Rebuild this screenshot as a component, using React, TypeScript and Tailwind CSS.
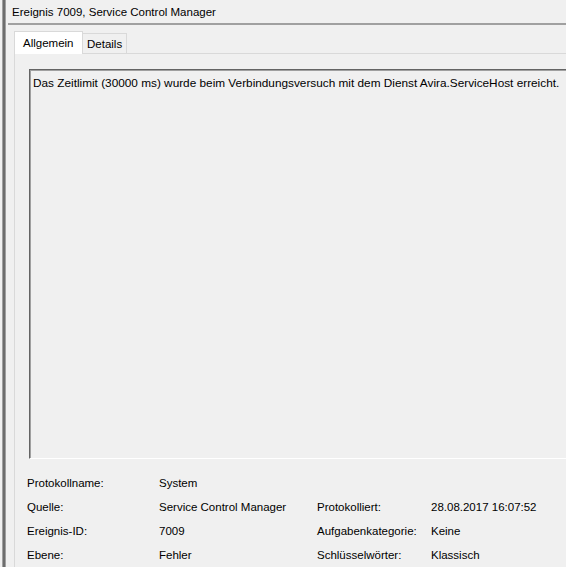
import React from "react";

const rows = [
  ["Protokollname:", "System", "", ""],
  ["Quelle:", "Service Control Manager", "Protokolliert:", "28.08.2017 16:07:52"],
  ["Ereignis-ID:", "7009", "Aufgabenkategorie:", "Keine"],
  ["Ebene:", "Fehler", "Schlüsselwörter:", "Klassisch"],
];

const App = () => {
  return (
    <div
      className="w-[566px] h-[567px] bg-[#f0f0f0] flex overflow-hidden text-[11.5px] text-black"
      style={{ fontFamily: '"Liberation Sans", Arial, sans-serif' }}
    >
      <div className="ml-[2px] w-[4px] h-full bg-[#6d6d6d] border-x border-[#a0a0a0]" />
      <div className="flex-1 flex flex-col min-w-0">
        <div className="h-[23px] pl-[6px] pt-[5px] leading-[14px] whitespace-nowrap">
          Ereignis 7009, Service Control Manager
        </div>
        <div className="ml-[2px] h-[2px] bg-[#a0a0a0]" />
        <div className="flex-1 flex flex-col pl-[8px] pt-[6px]">
          <div className="flex items-end h-[22px]">
            <div className="h-[23px] w-[69px] -mb-px relative z-10 bg-white border border-b-0 border-[#d9d9d9] pl-[8px] pt-[4px] leading-[14px]">
              Allgemein
            </div>
            <div className="h-[20px] w-[44px] border-t border-r border-[#d9d9d9] pl-[4px] pt-[3px] leading-[14px]">
              Details
            </div>
          </div>
          <div className="flex-1 flex flex-col border-l border-t border-[#d9d9d9] pl-[14px] pt-[15px]">
            <div className="h-[390px] border-l border-t border-[#646464] border-b border-b-white shadow-[inset_1px_1px_0_#a0a0a0] pl-[3px] pt-[6px] text-[11.8px] leading-[14px] whitespace-nowrap">
              Das Zeitlimit (30000 ms) wurde beim Verbindungsversuch mit dem Dienst Avira.ServiceHost erreicht.
            </div>
            <div className="mt-[12px] -ml-[2px] grid grid-cols-[132px_158px_114px_1fr] auto-rows-[24px] items-center whitespace-nowrap leading-[14px]">
              {rows.map((r, i) => (
                <React.Fragment key={i}>
                  <span>{r[0]}</span>
                  <span>{r[1]}</span>
                  <span>{r[2]}</span>
                  <span>{r[3]}</span>
                </React.Fragment>
              ))}
            </div>
          </div>
        </div>
      </div>
    </div>
  );
};

export default App;
